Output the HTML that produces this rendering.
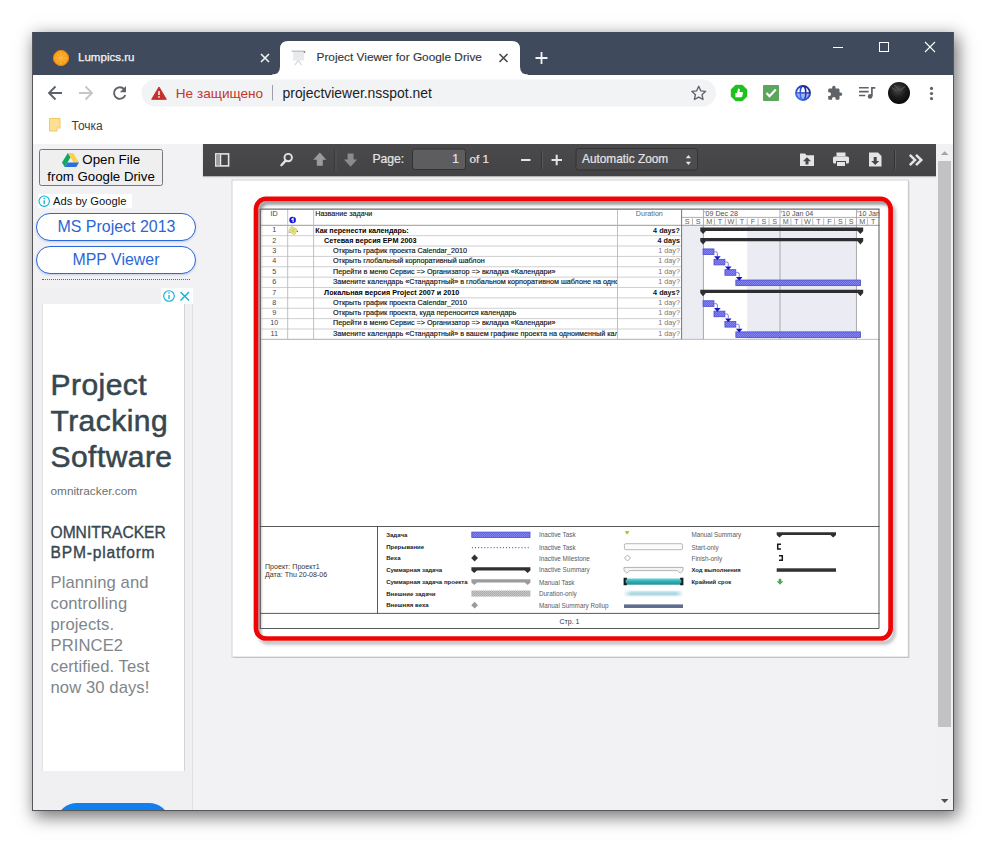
<!DOCTYPE html>
<html lang="ru"><head><meta charset="utf-8"><title>Project Viewer for Google Drive</title>
<style>
*{box-sizing:border-box;margin:0;padding:0}
html,body{width:986px;height:843px;overflow:hidden;background:#fff;font-family:"Liberation Sans",sans-serif}
.a{position:absolute}
#win{left:32px;top:32px;width:922px;height:779px;background:#f2f1f3;box-shadow:3px 5px 16px 1px rgba(0,0,0,.55),0 0 0 1px rgba(70,70,75,.9) inset;overflow:hidden}
#tabbar{left:0;top:0;width:922px;height:43px;background:#3f4a5c}
#toolbar{left:1px;top:43px;width:920px;height:69px;background:#fff}
.t{white-space:nowrap;line-height:1}
</style></head><body>
<div id="win" class="a">
<div id="tabbar" class="a"></div>
<div id="toolbar" class="a"></div>
<!--CHROME-START-->
<!-- tab strip -->
<svg class="a" style="left:0;top:0" width="922" height="43" viewBox="0 0 922 43">
<path d="M240 42.5 Q248 42.5 248 34.5 L248 17 Q248 9 256 9 L480 9 Q488 9 488 17 L488 34.5 Q488 42.5 496 42.5 L496 43 L240 43 Z" fill="#fff"/>
<!-- lumpics favicon -->
<circle cx="29" cy="26" r="7.6" fill="#f9a11b" stroke="#e8821a" stroke-width="1"/>
<g stroke="#fbbd4a" stroke-width="0.9"><path d="M29 20v12M23 26h12M24.8 21.8l8.4 8.4M33.2 21.8l-8.4 8.4"/></g>
<!-- tab1 close -->
<path d="M229 22l8 8M237 22l-8 8" stroke="#f1f3f5" stroke-width="1.6" fill="none"/>
<!-- tab2 favicon -->
<g transform="translate(258,18)"><rect x="1.500" y="0.500" width="13" height="1.500" fill="#c4c6c8"/><rect x="3" y="2" width="11" height="8.500" fill="#e9eaeb"/><path d="M8 10.500l-3 4.500M8.500 10.500l3 4.500" stroke="#d4d6d7" stroke-width="1.300"/><circle cx="14.500" cy="2" r=".8" fill="#555"/></g>
<!-- tab2 close -->
<path d="M467.500 22l8 8M475.500 22l-8 8" stroke="#45474a" stroke-width="1.6" fill="none"/>
<!-- plus -->
<path d="M503.500 26h12M509.500 20v12" stroke="#f1f3f5" stroke-width="1.8" fill="none"/>
<!-- window controls -->
<path d="M801 15.500h10" stroke="#fff" stroke-width="1"/>
<rect x="847.500" y="10.500" width="9" height="9" fill="none" stroke="#fff" stroke-width="1"/>
<path d="M893 10l10 10M903 10l-10 10" stroke="#fff" stroke-width="1.1"/>
</svg>
<div class="a t" style="left:46px;top:20.200px;font-size:11.550px;color:#f4f5f6;-webkit-text-stroke:.25px #f4f5f6">Lumpics.ru</div>
<div class="a t" style="left:284.500px;top:20px;font-size:11.830px;color:#33373a;-webkit-text-stroke:.15px #33373a">Project Viewer for Google Drive</div>
<!-- toolbar -->
<svg class="a" style="left:0;top:43px" width="922" height="70" viewBox="0 43 922 70">
<g fill="none" stroke="#5f6368" stroke-width="1.9">
<path d="M30 61H17.500M23.500 54.500L17 61l6.500 6.500"/>
<path d="M47 61H59.500M53.500 54.500L60 61l-6.500 6.500" stroke="#c4c6c9"/>
<path d="M92.200 57.200A5.800 5.800 0 1 0 93.300 63"/>
</g>
<path d="M94 54v6.200h-6.200z" fill="#5f6368"/>
<rect x="109.500" y="47.500" width="574.500" height="27" rx="13.500" fill="#f1f3f4"/>
<path d="M127 55l7.300 12.300h-14.600z" fill="#c5302a" stroke="#c5302a" stroke-width="1" stroke-linejoin="round"/>
<path d="M127 59v4" stroke="#fff" stroke-width="1.500"/><rect x="126.250" y="64.200" width="1.500" height="1.500" fill="#fff"/>
<path d="M240.500 53v15.500" stroke="#9aa0a6" stroke-width="1"/>
<!-- star -->
<path d="M666.700 54.300l2.050 4.500 4.900 .55-3.650 3.300 1 4.850-4.300-2.450-4.300 2.450 1-4.850-3.650-3.300 4.900-.55z" fill="none" stroke="#5f6368" stroke-width="1.350" stroke-linejoin="round"/>
<!-- ext icons -->
<g transform="translate(707,61)"><path d="M-3.400-8h6.800L8-3.400v6.800L3.400 8h-6.800L-8 3.400v-6.800z" fill="#1fc01f" stroke="#1fc01f" stroke-width=".4" stroke-linejoin="round"/><path d="M-3.600 4.300v-4.300h1.600l1.200-4.400c1.500-.1 1.900 1 1.600 2.100L.4-.9h2.500c.8 0 1.200.6 1 1.300L3.200 3.500c-.2.500-.6.800-1.100.8z" fill="#fff"/></g>
<g transform="translate(739,61)"><rect x="-8" y="-8" width="16" height="16" rx="1" fill="#5aa65a"/><path d="M-4.500 0l3 3.200L4.800-3.600" stroke="#fff" stroke-width="2.200" fill="none"/></g>
<g transform="translate(771,61)"><defs><linearGradient id="gl" x1="1" y1="0" x2="0" y2="1"><stop offset="0" stop-color="#1c1c86"/><stop offset=".6" stop-color="#2b4fd2"/><stop offset="1" stop-color="#4a7cf0"/></linearGradient></defs><circle r="7" fill="#fff" stroke="url(#gl)" stroke-width="1.900"/><path d="M-7 .3a7 7 0 0 0 14 0z" fill="#3d6de6" opacity=".5"/><ellipse rx="2.800" ry="7" fill="none" stroke="url(#gl)" stroke-width="1.500"/><rect x="-7" y="-.75" width="14" height="1.500" fill="url(#gl)"/></g>
<path transform="translate(794.860,53.130) scale(.667)" d="M20.500 11H19V7c0-1.100-.9-2-2-2h-4V3.500C13 2.120 11.880 1 10.500 1S8 2.120 8 3.500V5H4c-1.100 0-1.990.9-1.990 2v3.800H3.500c1.490 0 2.700 1.210 2.700 2.700s-1.210 2.700-2.700 2.700H2V20c0 1.100.9 2 2 2h3.800v-1.500c0-1.490 1.210-2.700 2.700-2.700 1.490 0 2.700 1.210 2.700 2.700V22H17c1.100 0 2-.9 2-2v-4h1.500c1.380 0 2.500-1.120 2.500-2.500S21.880 11 20.500 11z" fill="#5f6368"/>
<g transform="translate(834.500,61)" stroke="#5f6368" stroke-width="1.600" fill="none"><path d="M-7.500-5.200h9.700M-7.500-1.400h9.700M-7.500 2.500h6.300"/><path d="M5.400 3.300v-8.500h3.400" stroke-width="1.700"/><circle cx="3.600" cy="3.400" r="2.300" fill="#5f6368" stroke="none"/></g>
<defs><radialGradient id="av" cx=".45" cy=".35" r=".7"><stop offset="0" stop-color="#4a4a4a"/><stop offset=".5" stop-color="#1c1c1c"/><stop offset="1" stop-color="#050505"/></radialGradient></defs>
<circle cx="867" cy="61" r="11" fill="url(#av)"/>
<path d="M859.500 55.500l5 3.500M862 53l6.500 5 4.500-3.500" stroke="#5a5a5a" stroke-width="1.400" fill="none" opacity=".7"/>
<g fill="#5f6368"><circle cx="899.500" cy="56.400" r="1.600"/><circle cx="899.500" cy="61.500" r="1.600"/><circle cx="899.500" cy="66.600" r="1.600"/></g>
<!-- bookmark icon -->
<path d="M17.500 86.500h10.500v9.500l-3 3h-7.500z" fill="#fbe094" stroke="#f3c85c" stroke-width="1"/><path d="M25 99.200v-3.200h3.200" fill="#fff" stroke="#f3c85c" stroke-width=".8"/>
</svg>
<div class="a t" style="left:143.800px;top:54.900px;font-size:13.600px;color:#c5352b">Не защищено</div>
<div class="a t" style="left:250.500px;top:55.200px;font-size:13.930px;color:#202124">projectviewer.nsspot.net</div>
<div class="a t" style="left:39.500px;top:87.600px;font-size:12px;color:#3c4043">Точка</div>
<!--CHROME-END-->
<!--LEFT-START-->
<!-- left panel -->
<div class="a" style="left:1px;top:256px;width:160px;height:523px;background:#f0eff1"></div>
<div class="a" style="left:160px;top:256px;width:1px;height:523px;background:#e0e0e3"></div>
<div class="a" style="left:7px;top:117.300px;width:124px;height:37.200px;border:1px solid #767676;border-radius:2.500px;background:#efefef"></div>
<svg class="a" style="left:29.500px;top:121.400px" width="17" height="14" viewBox="0 0 17 14"><path d="M5.800 0h5.400l5.800 9.600h-5.400z" fill="#ffcf48"/><path d="M5.800 0L0 9.600 2.700 14l5.800-9.600z" fill="#11a861"/><path d="M5.500 9.600h11.500L14.300 14H2.700z" fill="#2d6fdd"/></svg>
<div class="a t" style="left:50.300px;top:120.700px;font-size:13.330px;color:#000">Open File</div>
<div class="a t" style="left:15.300px;top:138.200px;font-size:13.250px;color:#000">from Google Drive</div>
<div class="a" style="left:6px;top:161.500px;width:94px;height:14.500px;background:#fff"></div>
<svg class="a" style="left:6px;top:162.500px" width="13" height="13" viewBox="0 0 13 13"><circle cx="6.200" cy="6.200" r="5.200" fill="#fff" stroke="#10b0cf" stroke-width="1.100"/><path d="M6.200 5.300v4" stroke="#10b0cf" stroke-width="1.300"/><circle cx="6.200" cy="3.500" r=".8" fill="#10b0cf"/></svg>
<div class="a t" style="left:21px;top:164.200px;font-size:11.200px;color:#111">Ads by Google</div>
<div class="a" style="left:4px;top:180.700px;width:160px;height:28.300px;border:1.300px solid #2a68dc;border-radius:14px;background:#fff;box-shadow:0 1px 2px rgba(42,104,220,.25)"></div>
<div class="a t" style="left:25.500px;top:186.900px;font-size:15.960px;color:#2a66d6">MS Project 2013</div>
<div class="a" style="left:4px;top:214px;width:160px;height:28px;border:1.300px solid #2a68dc;border-radius:14px;background:#fff;box-shadow:0 1px 2px rgba(42,104,220,.25)"></div>
<div class="a t" style="left:40.500px;top:219.900px;font-size:15.920px;color:#2a66d6">MPP Viewer</div>
<div class="a" style="left:10px;top:247px;width:148px;height:0;border-top:1px dotted #666"></div>
<!-- ad -->
<div class="a" style="left:9.500px;top:271.500px;width:143px;height:467.500px;background:#fff;border-right:1px solid #d4d4d7;border-left:1px solid #e2e2e4"></div>
<div class="a" style="left:128.500px;top:255.500px;width:32px;height:16px;background:#fff"></div>
<svg class="a" style="left:128.500px;top:255.500px" width="32" height="16" viewBox="0 0 32 16"><circle cx="8" cy="8" r="5.300" fill="none" stroke="#10b0cf" stroke-width="1.100"/><path d="M8 7v4" stroke="#10b0cf" stroke-width="1.300"/><circle cx="8" cy="5" r=".8" fill="#10b0cf"/><path d="M19.500 4l8.500 8.500M28 4l-8.500 8.500" stroke="#10b0cf" stroke-width="1.400"/></svg>
<div class="a t" style="left:18.500px;top:334.600px;font-size:30px;line-height:36px;color:#37474f;white-space:pre;letter-spacing:.45px;-webkit-text-stroke:.55px #37474f">Project
Tracking
Software</div>
<div class="a t" style="left:18.500px;top:453.700px;font-size:11.800px;color:#6a6f73">omnitracker.com</div>
<div class="a t" style="left:18.500px;top:490.500px;font-size:15.600px;line-height:20.500px;color:#37474f;-webkit-text-stroke:.35px #37474f">OMNITRACKER<br><span style="letter-spacing:.8px">BPM-platform</span></div>
<div class="a t" style="left:18.500px;top:540px;font-size:16.600px;line-height:21px;letter-spacing:.1px;color:#80868b;white-space:pre">Planning and
controlling
projects.
PRINCE2
certified. Test
now 30 days!</div>
<div class="a" style="left:26px;top:770.800px;width:110px;height:36px;border-radius:19px/16px;background:#1080ee"></div>
<!--LEFT-END-->
<!--VIEWER-START-->
<div class="a" style="left:171px;top:112px;width:733px;height:32px;background:linear-gradient(#4a494b,#434244);box-shadow:0 1px 1px rgba(0,0,0,.25)"></div>
<div class="a" style="left:904px;top:112px;width:17px;height:667px;background:#f1f0f2"></div>
<div class="a" style="left:906px;top:129px;width:13px;height:566px;background:#c2c1c4"></div>
<svg class="a" style="left:0;top:0" width="922" height="779" viewBox="32 32 922 779" font-family="Liberation Sans, sans-serif">
<defs>
<pattern id="pb" width="2" height="2" patternUnits="userSpaceOnUse"><rect width="2" height="2" fill="#6464e6"/><rect width="1" height="1" fill="#8484f0"/><rect x="1" y="1" width="1" height="1" fill="#8484f0"/></pattern>
<pattern id="pg" width="2" height="2" patternUnits="userSpaceOnUse"><rect width="2" height="2" fill="#a9a9a9"/><rect width="1" height="1" fill="#c9c9c9"/><rect x="1" y="1" width="1" height="1" fill="#c9c9c9"/></pattern>
<linearGradient id="teal" x1="0" y1="0" x2="0" y2="1"><stop offset="0" stop-color="#7fd6da"/><stop offset=".45" stop-color="#2fb0b8"/><stop offset="1" stop-color="#1f8f98"/></linearGradient>
<linearGradient id="dur" x1="0" y1="0" x2="0" y2="1"><stop offset="0" stop-color="#e6f4f8"/><stop offset=".55" stop-color="#9fd2e0"/><stop offset="1" stop-color="#e6f4f8"/></linearGradient>
<linearGradient id="durh" x1="0" y1="0" x2="1" y2="0"><stop offset="0" stop-color="#fff" stop-opacity=".9"/><stop offset=".12" stop-color="#fff" stop-opacity="0"/><stop offset=".88" stop-color="#fff" stop-opacity="0"/><stop offset="1" stop-color="#fff" stop-opacity=".9"/></linearGradient>
<filter id="rs" x="-5%" y="-5%" width="110%" height="112%"><feGaussianBlur stdDeviation="1.500"/></filter>
<clipPath id="ctask"><rect x="313.6" y="225" width="303.4" height="115"/></clipPath>
<clipPath id="cg"><rect x="681.6" y="209" width="197.9" height="131"/></clipPath>
<clipPath id="cin"><rect x="258.300" y="201.200" width="630" height="435" rx="7.700"/></clipPath>
<clipPath id="cout"><path clip-rule="evenodd" d="M232 180h677v478h-677zM263.600 196.500h619.400a10 10 0 0 1 10 10v424.400a10 10 0 0 1-10 10h-619.400a10 10 0 0 1-10-10v-424.400a10 10 0 0 1 10-10z"/></clipPath>
<filter id="rs2" x="-5%" y="-5%" width="110%" height="112%"><feGaussianBlur stdDeviation="1.800"/></filter>
</defs>
<rect x="215.8" y="153.9" width="12.8" height="12" fill="none" stroke="#e4e4e4" stroke-width="1.6"/><rect x="216.5" y="154.5" width="3.6" height="11" fill="#9d9d9f"/><path d="M220.6 154v12" stroke="#e4e4e4" stroke-width="1.3"/>
<circle cx="288.2" cy="157.6" r="3.7" fill="none" stroke="#e4e4e4" stroke-width="1.9"/><path d="M285.6 160.6l-4.2 4.6" stroke="#e4e4e4" stroke-width="2.4" stroke-linecap="round"/>
<path d="M319.8 152.5l6.6 7.2h-3.6v6h-6v-6h-3.6z" fill="#9b9b9b"/>
<path d="M350.6 166.8l6.6-7.2h-3.6v-6h-6v6h-3.600z" fill="#8b8b8b"/>
<path d="M334.900 149.500v21" stroke="#333" stroke-width="1"/><path d="M335.900 149.500v21" stroke="#5a5a5a" stroke-width="1"/>
<text x="372.400" y="163" font-size="12.200" fill="#e4e4e4" stroke="#e4e4e4" stroke-width=".22">Page:</text>
<rect x="412.500" y="149" width="53" height="20.500" rx="2.500" fill="#5d5c5e" stroke="#333" stroke-width="1"/>
<text x="459" y="163" font-size="12" fill="#e4e4e4" stroke="#e4e4e4" stroke-width=".22" text-anchor="end">1</text>
<text x="469.400" y="163" font-size="11.700" fill="#e4e4e4" stroke="#e4e4e4" stroke-width=".22">of 1</text>
<path d="M521 160h9.500" stroke="#e4e4e4" stroke-width="2"/>
<path d="M541.500 151v18" stroke="#333" stroke-width="1"/><path d="M542.500 151v18" stroke="#5a5a5a" stroke-width="1"/>
<path d="M551.500 160h10.500M556.700 154.800v10.500" stroke="#e4e4e4" stroke-width="2"/>
<rect x="576" y="148.500" width="121.500" height="21.500" rx="2.500" fill="#4c4b4d" stroke="#343434" stroke-width="1"/>
<text x="582" y="162.900" font-size="11.850" fill="#e4e4e4" stroke="#e4e4e4" stroke-width=".22">Automatic Zoom</text>
<path d="M688.400 155l2.600 3.300h-5.200zM688.400 165l2.600-3.300h-5.200z" fill="#e4e4e4"/>
<path d="M800 153.500h5l1.500 1.800h7.500v10.700h-14z" fill="#e4e4e4"/><path d="M807 157.200l4 4h-2.500v3.300h-3v-3.300h-2.500z" fill="#464547"/>
<rect x="836.500" y="152.500" width="9" height="4" fill="#e4e4e4"/><rect x="833" y="156.500" width="16" height="7" rx="1.500" fill="#e4e4e4"/><rect x="836.500" y="161.500" width="9" height="5" fill="#e4e4e4" stroke="#464547" stroke-width="1"/>
<path d="M869 152.500h9l3.500 3.500v10.500h-12.500z" fill="#e4e4e4"/><path d="M875.200 165l-4-4h2.500v-4h3v4h2.500z" fill="#464547"/>
<path d="M894.500 150v19" stroke="#333" stroke-width="1"/><path d="M895.500 150v19" stroke="#5a5a5a" stroke-width="1"/>
<path d="M909.800 154.800l5.300 5.200-5.300 5.200M916 154.800l5.300 5.200-5.300 5.200" fill="none" stroke="#e4e4e4" stroke-width="2.500"/>
<path d="M944.700 803l3.800-4h-7.600z" fill="#505055"/>
<path d="M944.700 151.200l3.800 3.900h-7.600z" fill="#a3a3a7"/>
<rect x="232" y="180" width="676.300" height="477" fill="#fff" stroke="#d2d1d4" stroke-width="1"/>
<path d="M233 657.500h676M908.800 181v477" stroke="#c4c3c6" stroke-width="1" fill="none"/>
<g clip-path="url(#cin)"><rect x="258.500" y="202.400" width="634.600" height="439.600" rx="10" fill="none" stroke="#5a5a62" stroke-opacity=".62" stroke-width="4.700" filter="url(#rs)"/></g>
<g clip-path="url(#cout)"><rect x="259" y="202.900" width="634.600" height="439.600" rx="10" fill="none" stroke="#60606c" stroke-opacity=".38" stroke-width="4.700" filter="url(#rs2)"/></g>
<rect x="681.6" y="225.3" width="21.86" height="114.07" fill="#ecedf2"/>
<rect x="747.18" y="225.3" width="109.3" height="114.07" fill="#ebecf3"/>
<path d="M703.46 209.2V339.37" stroke="#99999d" stroke-width=".8"/>
<path d="M779.97 209.2V339.37" stroke="#99999d" stroke-width=".8"/>
<path d="M856.48 209.2V339.37" stroke="#99999d" stroke-width=".8"/>
<path d="M260.3 235.67H681.6" stroke="#c9c9cc" stroke-width=".9"/>
<path d="M260.3 246.04H681.6" stroke="#c9c9cc" stroke-width=".9"/>
<path d="M260.3 256.41H681.6" stroke="#c9c9cc" stroke-width=".9"/>
<path d="M260.3 266.78H681.6" stroke="#c9c9cc" stroke-width=".9"/>
<path d="M260.3 277.15H681.6" stroke="#c9c9cc" stroke-width=".9"/>
<path d="M260.3 287.52H681.6" stroke="#c9c9cc" stroke-width=".9"/>
<path d="M260.3 297.89H681.6" stroke="#c9c9cc" stroke-width=".9"/>
<path d="M260.3 308.26H681.6" stroke="#c9c9cc" stroke-width=".9"/>
<path d="M260.3 318.63H681.6" stroke="#c9c9cc" stroke-width=".9"/>
<path d="M260.3 329H681.6" stroke="#c9c9cc" stroke-width=".9"/>
<path d="M260.3 339.37H681.6" stroke="#c9c9cc" stroke-width=".9"/>
<path d="M260.3 339.37H879.5" stroke="#b5b5b8" stroke-width=".9"/>
<path d="M260.3 225.3H879.5" stroke="#9a9a9e" stroke-width="1"/>
<path d="M681.6 217.4H879.5" stroke="#a5a5a8" stroke-width=".9"/>
<path d="M287.7 209.2V339.37" stroke="#b9b9bc" stroke-width=".9"/>
<path d="M313.6 209.2V339.37" stroke="#b9b9bc" stroke-width=".9"/>
<path d="M617.5 209.2V339.37" stroke="#b9b9bc" stroke-width=".9"/>
<path d="M681.6 209.2V339.37" stroke="#77777b" stroke-width="1"/>
<text x="687.27" y="224" font-size="7.200" fill="#5c5c60" text-anchor="middle">S</text>
<path d="M692.53 218.4V225.3" stroke="#b0b0b4" stroke-width=".9"/>
<text x="698.2" y="224" font-size="7.200" fill="#5c5c60" text-anchor="middle">S</text>
<text x="709.13" y="224" font-size="7.200" fill="#5c5c60" text-anchor="middle">M</text>
<path d="M714.39 218.4V225.3" stroke="#b0b0b4" stroke-width=".9"/>
<text x="720.06" y="224" font-size="7.200" fill="#5c5c60" text-anchor="middle">T</text>
<path d="M725.32 218.4V225.3" stroke="#b0b0b4" stroke-width=".9"/>
<text x="730.99" y="224" font-size="7.200" fill="#5c5c60" text-anchor="middle">W</text>
<path d="M736.25 218.4V225.3" stroke="#b0b0b4" stroke-width=".9"/>
<text x="741.92" y="224" font-size="7.200" fill="#5c5c60" text-anchor="middle">T</text>
<path d="M747.18 218.4V225.3" stroke="#b0b0b4" stroke-width=".9"/>
<text x="752.85" y="224" font-size="7.200" fill="#5c5c60" text-anchor="middle">F</text>
<path d="M758.11 218.4V225.3" stroke="#b0b0b4" stroke-width=".9"/>
<text x="763.78" y="224" font-size="7.200" fill="#5c5c60" text-anchor="middle">S</text>
<path d="M769.04 218.4V225.3" stroke="#b0b0b4" stroke-width=".9"/>
<text x="774.71" y="224" font-size="7.200" fill="#5c5c60" text-anchor="middle">S</text>
<text x="785.64" y="224" font-size="7.200" fill="#5c5c60" text-anchor="middle">M</text>
<path d="M790.9 218.4V225.3" stroke="#b0b0b4" stroke-width=".9"/>
<text x="796.57" y="224" font-size="7.200" fill="#5c5c60" text-anchor="middle">T</text>
<path d="M801.83 218.4V225.3" stroke="#b0b0b4" stroke-width=".9"/>
<text x="807.5" y="224" font-size="7.200" fill="#5c5c60" text-anchor="middle">W</text>
<path d="M812.76 218.4V225.3" stroke="#b0b0b4" stroke-width=".9"/>
<text x="818.43" y="224" font-size="7.200" fill="#5c5c60" text-anchor="middle">T</text>
<path d="M823.69 218.4V225.3" stroke="#b0b0b4" stroke-width=".9"/>
<text x="829.36" y="224" font-size="7.200" fill="#5c5c60" text-anchor="middle">F</text>
<path d="M834.62 218.4V225.3" stroke="#b0b0b4" stroke-width=".9"/>
<text x="840.29" y="224" font-size="7.200" fill="#5c5c60" text-anchor="middle">S</text>
<path d="M845.55 218.4V225.3" stroke="#b0b0b4" stroke-width=".9"/>
<text x="851.22" y="224" font-size="7.200" fill="#5c5c60" text-anchor="middle">S</text>
<text x="862.15" y="224" font-size="7.200" fill="#5c5c60" text-anchor="middle">M</text>
<path d="M867.41 218.4V225.3" stroke="#b0b0b4" stroke-width=".9"/>
<text x="873.08" y="224" font-size="7.200" fill="#5c5c60" text-anchor="middle">T</text>
<g clip-path="url(#cg)" font-size="7.100" fill="#4c4c50">
<text x="704.26" y="216.300">'09 Dec 28</text>
<text x="780.77" y="216.300">'10 Jan 04</text>
<text x="857.28" y="216.300">'10 Jan 11</text>
</g>
<text x="274.200" y="216.300" font-size="7.200" fill="#444" text-anchor="middle">ID</text>
<text x="315.200" y="216.300" font-size="7.200" fill="#111" stroke="#111" stroke-width=".12">Название задачи</text>
<text x="649.300" y="216.300" font-size="7.200" fill="#666" text-anchor="middle">Duration</text>
<circle cx="292.600" cy="220" r="3.300" fill="#1212dc"/><path d="M291.400 219.700l1.700-1.300v3.800" stroke="#fff" stroke-width="1.100" fill="none"/>
<g transform="translate(293,230.500) rotate(28)"><rect x="-3.500" y="-3" width="7" height="6" rx="1" fill="#e9e88c" stroke="#b8b450" stroke-width=".5"/><path d="M-2-1h4M-2 .8h4" stroke="#b0aa48" stroke-width=".5"/><circle cx="4.300" cy="-1.200" r=".5" fill="#222"/><circle cx="-2.500" cy="3.500" r=".4" fill="#222"/></g>
<g font-size="7.220">
<text x="274.200" y="232.16" fill="#48484c" text-anchor="middle">1</text>
<text x="315.2" y="233" fill="#000" font-weight="700" clip-path="url(#ctask)">Как перенести календарь:</text>
<text x="680" y="233" fill="#111" font-weight="700" text-anchor="end">4 days?</text>
<text x="274.200" y="242.53" fill="#48484c" text-anchor="middle">2</text>
<text x="324.1" y="242.53" fill="#000" font-weight="700" clip-path="url(#ctask)">Сетевая версия EPM 2003</text>
<text x="680" y="242.53" fill="#111" font-weight="700" text-anchor="end">4 days</text>
<text x="274.200" y="253.04" fill="#48484c" text-anchor="middle">3</text>
<text x="333" y="253.04" fill="#111" stroke="#111" stroke-width=".15" clip-path="url(#ctask)">Открыть график проекта Calendar_2010</text>
<text x="680" y="253.04" fill="#77777b"  text-anchor="end">1 day?</text>
<text x="274.200" y="262.98" fill="#48484c" text-anchor="middle">4</text>
<text x="333" y="262.98" fill="#111" stroke="#111" stroke-width=".15" clip-path="url(#ctask)">Открыть глобальный корпоративный шаблон</text>
<text x="680" y="262.98" fill="#77777b"  text-anchor="end">1 day?</text>
<text x="274.200" y="273.78" fill="#48484c" text-anchor="middle">5</text>
<text x="333" y="273.78" fill="#111" stroke="#111" stroke-width=".15" clip-path="url(#ctask)">Перейти в меню Сервис =&gt; Организатор =&gt; вкладка «Календари»</text>
<text x="680" y="273.78" fill="#77777b"  text-anchor="end">1 day?</text>
<text x="274.200" y="283.72" fill="#48484c" text-anchor="middle">6</text>
<text x="333" y="283.72" fill="#111" stroke="#111" stroke-width=".15" clip-path="url(#ctask)">Замените календарь «Стандартный» в глобальном корпоративном шаблоне на одном</text>
<text x="680" y="283.72" fill="#77777b"  text-anchor="end">1 day?</text>
<text x="274.200" y="295.42" fill="#48484c" text-anchor="middle">7</text>
<text x="324.1" y="295.42" fill="#000" font-weight="700" clip-path="url(#ctask)">Локальная версия Project 2007 и 2010</text>
<text x="680" y="295.42" fill="#111" font-weight="700" text-anchor="end">4 days?</text>
<text x="274.200" y="304.59" fill="#48484c" text-anchor="middle">8</text>
<text x="333" y="304.59" fill="#111" stroke="#111" stroke-width=".15" clip-path="url(#ctask)">Открыть график проекта Calendar_2010</text>
<text x="680" y="304.59" fill="#77777b"  text-anchor="end">1 day?</text>
<text x="274.200" y="315.12" fill="#48484c" text-anchor="middle">9</text>
<text x="333" y="315.12" fill="#111" stroke="#111" stroke-width=".15" clip-path="url(#ctask)">Открыть график проекта, куда переносится календарь</text>
<text x="680" y="315.12" fill="#77777b"  text-anchor="end">1 day?</text>
<text x="274.200" y="325.33" fill="#48484c" text-anchor="middle">10</text>
<text x="333" y="325.33" fill="#111" stroke="#111" stroke-width=".15" clip-path="url(#ctask)">Перейти в меню Сервис =&gt; Организатор =&gt; вкладка «Календари»</text>
<text x="680" y="325.33" fill="#77777b"  text-anchor="end">1 day?</text>
<text x="274.200" y="335.86" fill="#48484c" text-anchor="middle">11</text>
<text x="333" y="335.86" fill="#111" stroke="#111" stroke-width=".15" clip-path="url(#ctask)">Замените календарь «Стандартный» в вашем графике проекта на одноименный календарь</text>
<text x="680" y="335.86" fill="#77777b"  text-anchor="end">1 day?</text>
</g>
<path d="M700.26 227.59H863.2V230.89l-2.8 3.2l-2.8 -3.2H705.86l-2.8 3.2l-2.8 -3.2z" fill="#2e2e30"/>
<path d="M700.26 237.96H863.2V241.26l-2.8 3.2l-2.8 -3.2H705.86l-2.8 3.2l-2.8 -3.2z" fill="#2e2e30"/>
<path d="M700.26 289.81H863.2V293.11l-2.8 3.2l-2.8 -3.2H705.86l-2.8 3.2l-2.8 -3.2z" fill="#2e2e30"/>
<rect x="703.06" y="248.93" width="10.9" height="5.600" fill="url(#pb)" stroke="#4a4ad8" stroke-width=".8"/>
<rect x="713.99" y="259.3" width="10.9" height="5.600" fill="url(#pb)" stroke="#4a4ad8" stroke-width=".8"/>
<rect x="724.92" y="269.67" width="10.9" height="5.600" fill="url(#pb)" stroke="#4a4ad8" stroke-width=".8"/>
<rect x="735.85" y="280.03" width="124.75" height="5.600" fill="url(#pb)" stroke="#4a4ad8" stroke-width=".8"/>
<path d="M714.36 251.73h1.400q1.600 0 1.600 1.600V256.1" fill="none" stroke="#6b6bd6" stroke-width=".9"/><path d="M714.06 256.2h6.600l-3.300 3.700z" fill="#1414c4"/>
<path d="M725.29 262.1h1.400q1.600 0 1.600 1.600V266.47" fill="none" stroke="#6b6bd6" stroke-width=".9"/><path d="M724.99 266.57h6.600l-3.300 3.700z" fill="#1414c4"/>
<path d="M736.22 272.47h1.400q1.600 0 1.600 1.600V276.83" fill="none" stroke="#6b6bd6" stroke-width=".9"/><path d="M735.92 276.94h6.600l-3.300 3.700z" fill="#1414c4"/>
<rect x="703.06" y="300.77" width="10.9" height="5.600" fill="url(#pb)" stroke="#4a4ad8" stroke-width=".8"/>
<rect x="713.99" y="311.14" width="10.9" height="5.600" fill="url(#pb)" stroke="#4a4ad8" stroke-width=".8"/>
<rect x="724.92" y="321.51" width="10.9" height="5.600" fill="url(#pb)" stroke="#4a4ad8" stroke-width=".8"/>
<rect x="735.85" y="331.88" width="124.75" height="5.600" fill="url(#pb)" stroke="#4a4ad8" stroke-width=".8"/>
<path d="M714.36 303.57h1.400q1.600 0 1.600 1.600V307.94" fill="none" stroke="#6b6bd6" stroke-width=".9"/><path d="M714.06 308.05h6.600l-3.300 3.700z" fill="#1414c4"/>
<path d="M725.29 313.94h1.400q1.600 0 1.600 1.600V318.31" fill="none" stroke="#6b6bd6" stroke-width=".9"/><path d="M724.99 318.42h6.600l-3.300 3.700z" fill="#1414c4"/>
<path d="M736.22 324.31h1.400q1.600 0 1.600 1.600V328.69" fill="none" stroke="#6b6bd6" stroke-width=".9"/><path d="M735.92 328.79h6.600l-3.300 3.700z" fill="#1414c4"/>
<path d="M260.3 209.2H879.5" stroke="#6e6e72" stroke-width="1.300"/>
<path d="M260.3 209.2V628.500H879.0V209.2" fill="none" stroke="#3c3c40" stroke-width=".85"/>
<path d="M260.3 526.500H879.5M260.3 613.400H879.5M377.500 526.500V613.400" stroke="#3c3c40" stroke-width=".85" fill="none"/>
<text x="265" y="569.200" font-size="7.100" fill="#333">Проект: Проект1</text>
<text x="265" y="577.300" font-size="7.100" fill="#333">Дата: Thu 20-08-06</text>
<text x="569.500" y="624.100" font-size="7" fill="#333" text-anchor="middle">Стр. 1</text>
<text x="386.200" y="537" font-size="6.050" font-weight="700" fill="#222">Задача</text>
<text x="386.200" y="549.2" font-size="6.050" font-weight="700" fill="#222">Прерывание</text>
<text x="386.200" y="560.1" font-size="6.050" font-weight="700" fill="#222">Веха</text>
<text x="386.200" y="572" font-size="6.050" font-weight="700" fill="#222">Суммарная задача</text>
<text x="386.200" y="584.1" font-size="6.050" font-weight="700" fill="#222">Суммарная задача проекта</text>
<text x="386.200" y="595.9" font-size="6.050" font-weight="700" fill="#222">Внешние задачи</text>
<text x="386.200" y="607.3" font-size="6.050" font-weight="700" fill="#222">Внешняя веха</text>
<text x="539" y="537.4" font-size="6.350" fill="#5a5a5e">Inactive Task</text>
<text x="539" y="549.6" font-size="6.350" fill="#5a5a5e">Inactive Task</text>
<text x="539" y="560.5" font-size="6.350" fill="#5a5a5e">Inactive Milestone</text>
<text x="539" y="572.4" font-size="6.350" fill="#5a5a5e">Inactive Summary</text>
<text x="539" y="584.5" font-size="6.350" fill="#5a5a5e">Manual Task</text>
<text x="539" y="596.3" font-size="6.350" fill="#5a5a5e">Duration-only</text>
<text x="539" y="607.7" font-size="6.350" fill="#5a5a5e">Manual Summary Rollup</text>
<text x="691.500" y="537.4" font-size="6.350" fill="#5a5a5e">Manual Summary</text>
<text x="691.500" y="549.6" font-size="6.350" fill="#5a5a5e">Start-only</text>
<text x="691.500" y="560.5" font-size="6.350" fill="#5a5a5e">Finish-only</text>
<text x="691.500" y="572" font-size="5.850" font-weight="700" fill="#222">Ход выполнения</text>
<text x="691.500" y="584.1" font-size="5.850" font-weight="700" fill="#222">Крайний срок</text>
<rect x="471.79999999999995" y="532.100" width="58.2" height="5.400" fill="url(#pb)" stroke="#4a4ad8" stroke-width=".8"/>
<path d="M471.9 547.600H530.4" stroke="#5a5ac8" stroke-width="1.200" stroke-dasharray="1 2.100"/>
<path d="M474.600 554.600l3.400 3.400-3.400 3.400-3.400-3.400z" fill="#333"/>
<path d="M471.4 567.3H530.4V570.5l-2.8 2.6l-2.8 -2.6H477l-2.8 2.6l-2.8 -2.6z" fill="#303032"/>
<path d="M471.4 579.3H530.4V582.5l-2.8 2.6l-2.8 -2.6H477l-2.8 2.6l-2.8 -2.6z" fill="#9c9c9e"/>
<rect x="471.4" y="590.500" width="59" height="6.100" fill="url(#pg)"/>
<path d="M474.600 601.800l3.400 3.400-3.400 3.400-3.400-3.400z" fill="#9a9a9c"/>
<path d="M625.200 531.200q1-.9 1.900 0q.9-.9 1.900 0q.5 1.200-1.900 3.200q-2.400-2-1.900-3.200z" fill="#a6c936"/>
<rect x="624.4" y="543.700" width="58.2" height="6" rx="1.500" fill="#fbfbfb" stroke="#a4a4a8" stroke-width=".8"/>
<path d="M627.500 555l3 3-3 3-3-3z" fill="#fff" stroke="#9a9a9e" stroke-width=".8"/>
<path d="M624 567.400H683V570.600l-2.800 2.600-2.800-2.600H629.6l-2.800 2.600-2.800-2.600z" fill="#f4f4f4" stroke="#a2a2a6" stroke-width=".8"/>
<rect x="624" y="578.400" width="59" height="6.300" fill="url(#teal)"/>
<path d="M626.8 578.800H624.6V584.300H626.8M680.2 578.800H682.4V584.300H680.2" fill="none" stroke="#1a1a1c" stroke-width="2"/>
<rect x="624" y="590.400" width="59" height="6.200" fill="url(#dur)"/><rect x="624" y="590.400" width="59" height="6.200" fill="url(#durh)"/>
<rect x="624" y="604.400" width="59" height="3.600" fill="#5f6d8e"/>
<path d="M776.7 532.2H836V535l-2.8 2.6l-2.8 -2.6H782.3l-2.8 2.6l-2.8 -2.6z" fill="#303032"/>
<path d="M781 544.300h-3.300v4.600h3.300" fill="none" stroke="#1a1a1c" stroke-width="1.500"/>
<path d="M779 555.700h3.300v4.600h-3.300" fill="none" stroke="#1a1a1c" stroke-width="1.500"/>
<rect x="776.7" y="568.300" width="59.3" height="3.500" fill="#333336"/>
<path d="M778.700 578.700h2.600v2.600h2l-3.300 3.500-3.300-3.500h2z" fill="#4ea64e"/>
<rect x="256" y="198.900" width="634.600" height="439.600" rx="10" fill="none" stroke="#ee0405" stroke-width="4.700"/>
</svg>
<!--VIEWER-END-->
<div class="a" style="left:0;top:0;width:922px;height:779px;border:1px solid #55565a;border-top-color:#3f4a5c;pointer-events:none"></div>
</div>
</body></html>
